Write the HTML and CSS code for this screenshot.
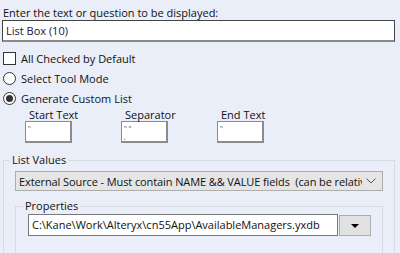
FILE: index.html
```html
<!DOCTYPE html>
<html lang="en">
<head>
  <meta charset="UTF-8" />
  <title>List Box Configuration</title>
  <link rel="stylesheet" href="styles.css">
</head>
<body>

  <div class="panel">
    <div class="prompt-label">Enter the text or question to be displayed:</div>
    <div class="text-box">List Box (10)</div>

    <div class="options">
      <div class="option">
        <span class="check"></span>
        <span>All Checked by Default</span>
      </div>
      <div class="option">
        <span class="radio"></span>
        <span>Select Tool Mode</span>
      </div>
      <div class="option">
        <span class="radio selected"></span>
        <span>Generate Custom List</span>
      </div>
    </div>

    <div class="custom-list">
      <div class="custom-field">
        <div class="custom-label">Start Text</div>
        <div class="small-box"><span class="tiny red">"</span></div>
      </div>
      <div class="custom-field">
        <div class="custom-label">Separator</div>
        <div class="small-box"><span class="tiny blue">" "</span><br><span class="tiny red">,</span></div>
      </div>
      <div class="custom-field">
        <div class="custom-label">End Text</div>
        <div class="small-box"><span class="tiny blue">"</span></div>
      </div>
    </div>

    <fieldset class="group">
      <legend>List Values</legend>
      <div class="dropdown">
        <span class="dropdown-text">External Source - Must contain NAME &amp;&amp; VALUE fields&nbsp; (can be relative to the module)</span>
        <svg class="chevron" width="10" height="6" viewBox="0 0 10 6">
          <polyline points="0.5,0.5 5,5 9.5,0.5" fill="none" stroke="#555" stroke-width="1"/>
        </svg>
      </div>

      <fieldset class="group inner">
        <legend>Properties</legend>
        <div class="path-row">
          <div class="path-box">C:\Kane\Work\Alteryx\cn55App\AvailableManagers.yxdb</div>
          <button class="drop-btn">
            <svg width="8" height="4" viewBox="0 0 8 4"><polygon points="0,0 8,0 4,4" fill="#000"/></svg>
          </button>
        </div>
      </fieldset>
    </fieldset>
  </div>

</body>
</html>
```

FILE: styles.css
```css
body {
  margin: 0;
  background: #e9eef9;
  font-family: 'Open Sans', 'Noto Sans', sans-serif;
  font-size: 11px;
  color: #111;
  overflow: hidden;
}

.panel {
  padding: 6px 5px 0 2px;
}

.prompt-label {
  line-height: 14px;
  padding-left: 1px;
}

.text-box {
  height: 19px;
  line-height: 19px;
  background: white;
  border: 1px solid #444;
  border-bottom: 2px solid #8a8a8a;
  padding-left: 3px;
  color: #14143c;
}

.options {
  margin-top: 6px;
}

.option {
  display: flex;
  align-items: center;
  gap: 5px;
  height: 20px;
  padding-left: 1px;
}

.check {
  width: 11px;
  height: 11px;
  background: white;
  border: 1px solid #333;
}

.radio {
  width: 11px;
  height: 11px;
  background: white;
  border: 1px solid #333;
  border-radius: 50%;
  display: flex;
  align-items: center;
  justify-content: center;
}

.radio.selected::after {
  content: "";
  width: 7px;
  height: 7px;
  border-radius: 50%;
  background: #333;
}

.custom-list {
  display: flex;
  padding-left: 23px;
  gap: 49px;
}

.custom-field {
  width: 47px;
}

.custom-label {
  line-height: 13px;
  padding-left: 4px;
  white-space: nowrap;
}

.small-box {
  height: 17px;
  background: white;
  border: 1px solid #8c8c8c;
  border-right-width: 2px;
  border-bottom-width: 2px;
  padding: 2px 2px 0;
  line-height: 6px;
  box-sizing: content-box;
}

.tiny {
  font-size: 7px;
}

.red {
  color: #b0402a;
}

.blue {
  color: #2a4aa0;
}

.group {
  min-width: 0;
  margin: 10px 0 0 1px;
  padding: 4px 11px 20px 11px;
  border: 1px solid #d6dae3;
  border-bottom: none;
}

.group legend {
  padding: 0 2px;
  margin-left: -5px;
  line-height: 14px;
}

.dropdown {
  display: flex;
  align-items: center;
  height: 18px;
  background: #e5e5e5;
  border: 1px solid #adadad;
  padding: 0 6px 0 3px;
  margin-top: 0;
}

.dropdown-text {
  flex: 1;
  white-space: nowrap;
  overflow: hidden;
  letter-spacing: -0.1px;
}

.chevron {
  margin-left: 4px;
}

.group.inner {
  margin: 8px 0 0 0;
  padding: 1px 11px 20px 12px;
}

.path-row {
  display: flex;
}

.path-box {
  flex: 1;
  height: 20px;
  line-height: 20px;
  background: white;
  border: 1px solid #7a7a7a;
  padding-left: 3px;
  white-space: nowrap;
  overflow: hidden;
}

.drop-btn {
  width: 32px;
  height: 21px;
  margin: 1px 0 0 1px;
  background: #e1e1e1;
  border: 1px solid #adadad;
  padding: 0;
  display: flex;
  align-items: center;
  justify-content: center;
}
```
